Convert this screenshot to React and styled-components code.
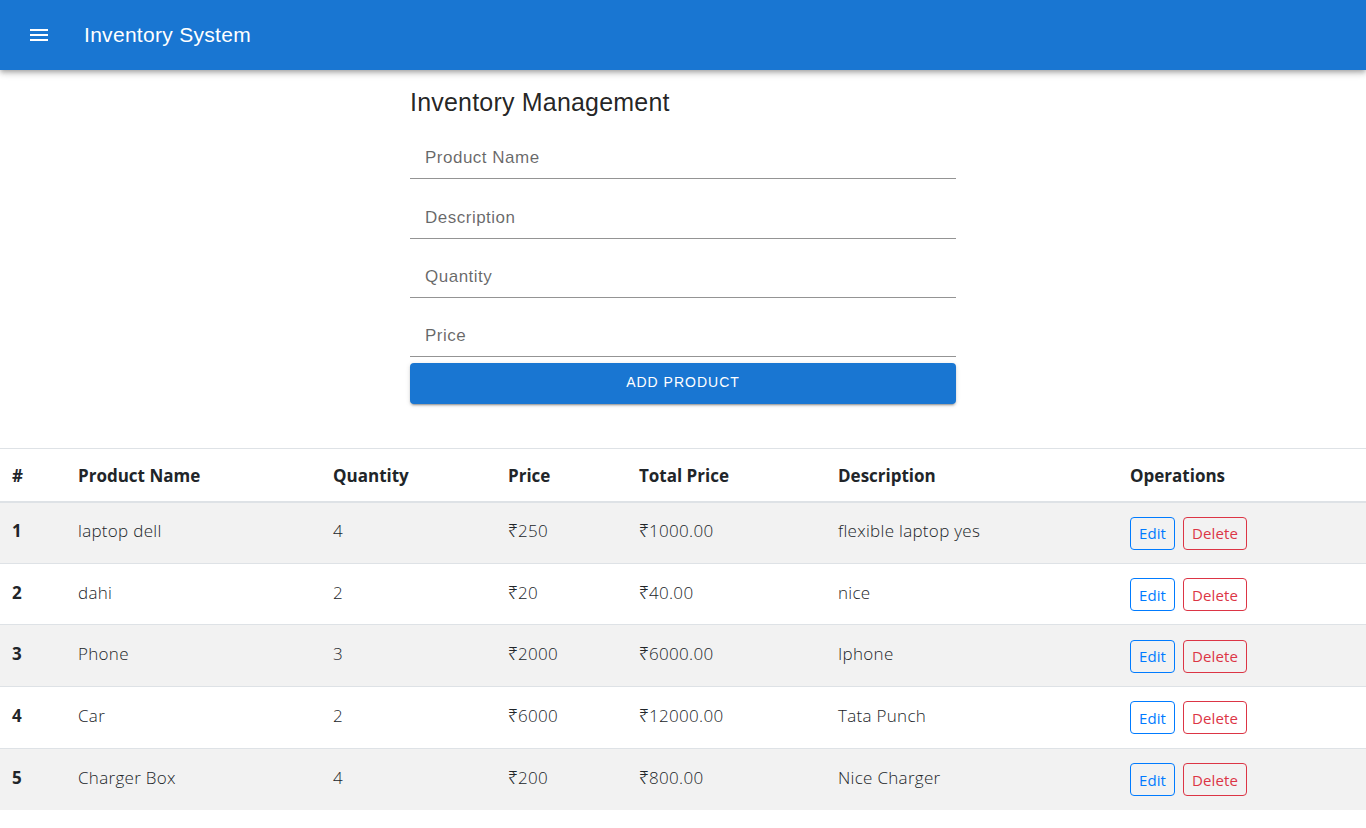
import React from "react";
import styled, { createGlobalStyle } from "styled-components";

const GlobalStyle = createGlobalStyle`
  * { box-sizing: border-box; }
  body {
    margin: 0;
    background: #ffffff;
    font-family: "Liberation Sans", Arial, sans-serif;
  }
`;

const AppBar = styled.header`
  height: 70px;
  background: #1976d2;
  color: #ffffff;
  display: flex;
  align-items: center;
  padding: 0 24px 0 27px;
  gap: 33px;
  box-shadow: 0px 2px 4px -1px rgba(0, 0, 0, 0.2), 0px 4px 5px 0px rgba(0, 0, 0, 0.14),
    0px 1px 10px 0px rgba(0, 0, 0, 0.12);
  position: relative;
  z-index: 1;
`;

const MenuButton = styled.button`
  background: none;
  border: none;
  padding: 0;
  width: 24px;
  height: 24px;
  color: #ffffff;
  display: flex;
  align-items: center;
  justify-content: center;
  cursor: pointer;
`;

const BarTitle = styled.h1`
  margin: 0;
  font-family: "Liberation Sans", Arial, sans-serif;
  font-size: 21px;
  font-weight: 400;
  letter-spacing: 0.3px;
`;

const FormSection = styled.section`
  width: 546px;
  margin: 16px auto 0;
  display: flex;
  flex-direction: column;
`;

const Heading = styled.h2`
  margin: 0 0 2px;
  font-family: "Liberation Sans", Arial, sans-serif;
  font-size: 25px;
  font-weight: 400;
  line-height: 32px;
  letter-spacing: 0.2px;
  color: rgba(0, 0, 0, 0.87);
`;

const Field = styled.label`
  height: 59.3px;
  display: flex;
  flex-direction: column;
  justify-content: flex-end;
  border-bottom: 1px solid rgba(0, 0, 0, 0.42);
`;

const FieldLabel = styled.span`
  font-family: "Liberation Sans", Arial, sans-serif;
  font-size: 17px;
  line-height: 24px;
  padding: 0 15px 8px;
  color: rgba(0, 0, 0, 0.6);
  letter-spacing: 0.5px;
`;

const PrimaryButton = styled.button`
  margin-top: 6px;
  height: 41px;
  padding: 0 16px 4px;
  border: none;
  border-radius: 4px;
  background: #1976d2;
  color: #ffffff;
  font-family: "Liberation Sans", Arial, sans-serif;
  font-size: 14px;
  font-weight: 400;
  letter-spacing: 1px;
  text-transform: uppercase;
  box-shadow: 0px 3px 1px -2px rgba(0, 0, 0, 0.2), 0px 2px 2px 0px rgba(0, 0, 0, 0.14),
    0px 1px 5px 0px rgba(0, 0, 0, 0.12);
  cursor: pointer;
`;

const Table = styled.table`
  width: 100%;
  margin-top: 44px;
  border-collapse: collapse;
  table-layout: fixed;
  font-family: "Open Sans", "Noto Sans", sans-serif;
  color: #212529;
  border-top: 1px solid #dee2e6;
`;

const HeadCell = styled.th`
  height: 53px;
  padding: 2px 12px 0;
  text-align: left;
  font-size: 17px;
  font-weight: 700;
  border-bottom: 2px solid #dee2e6;
  vertical-align: middle;
`;

const Row = styled.tr`
  height: 61.6px;
  background: ${(p) => (p.$striped ? "#f2f2f2" : "#ffffff")};
  border-top: 1px solid #dee2e6;
`;

const Cell = styled.td`
  padding: 0 12px 4px;
  font-size: 17px;
  font-weight: ${(p) => (p.$bold ? 700 : 300)};
  letter-spacing: ${(p) => (p.$bold ? "0" : "0.3px")};
  vertical-align: middle;
  white-space: nowrap;
`;

const Actions = styled.div`
  display: flex;
  gap: 8px;
  padding-top: 5px;
`;

const OutlineButton = styled.button`
  height: 33px;
  padding: 0 8px;
  background: transparent;
  border: 1px solid ${(p) => p.$color};
  color: ${(p) => p.$color};
  border-radius: 4px;
  font-family: "Open Sans", "Noto Sans", sans-serif;
  font-size: 15px;
  font-weight: 400;
  letter-spacing: 0.1px;
  cursor: pointer;
`;

const MenuIcon = () => (
  <svg width="24" height="24" viewBox="0 0 24 24" fill="currentColor">
    <path d="M3 18h18v-2H3zm0-5h18v-2H3zm0-7v2h18V6z" />
  </svg>
);

const products = [
  { name: "laptop dell", qty: 4, price: 250, desc: "flexible laptop yes" },
  { name: "dahi", qty: 2, price: 20, desc: "nice" },
  { name: "Phone", qty: 3, price: 2000, desc: "Iphone" },
  { name: "Car", qty: 2, price: 6000, desc: "Tata Punch" },
  { name: "Charger Box", qty: 4, price: 200, desc: "Nice Charger" },
];

const columns = [
  { label: "#", width: 66 },
  { label: "Product Name", width: 255 },
  { label: "Quantity", width: 175 },
  { label: "Price", width: 131 },
  { label: "Total Price", width: 199 },
  { label: "Description", width: 292 },
  { label: "Operations", width: 248 },
];

export default function App() {
  return (
    <>
      <GlobalStyle />
      <AppBar>
        <MenuButton aria-label="menu">
          <MenuIcon />
        </MenuButton>
        <BarTitle>Inventory System</BarTitle>
      </AppBar>

      <FormSection>
        <Heading>Inventory Management</Heading>
        {["Product Name", "Description", "Quantity", "Price"].map((l) => (
          <Field key={l}>
            <FieldLabel>{l}</FieldLabel>
          </Field>
        ))}
        <PrimaryButton>Add Product</PrimaryButton>
      </FormSection>

      <Table>
        <colgroup>
          {columns.map((c) => (
            <col key={c.label} style={{ width: c.width }} />
          ))}
        </colgroup>
        <thead>
          <tr>
            {columns.map((c) => (
              <HeadCell key={c.label}>{c.label}</HeadCell>
            ))}
          </tr>
        </thead>
        <tbody>
          {products.map((p, i) => (
            <Row key={p.name} $striped={i % 2 === 0}>
              <Cell $bold>{i + 1}</Cell>
              <Cell>{p.name}</Cell>
              <Cell>{p.qty}</Cell>
              <Cell>₹{p.price}</Cell>
              <Cell>₹{(p.price * p.qty).toFixed(2)}</Cell>
              <Cell>{p.desc}</Cell>
              <Cell>
                <Actions>
                  <OutlineButton $color="#007bff">Edit</OutlineButton>
                  <OutlineButton $color="#dc3545">Delete</OutlineButton>
                </Actions>
              </Cell>
            </Row>
          ))}
        </tbody>
      </Table>
    </>
  );
}
